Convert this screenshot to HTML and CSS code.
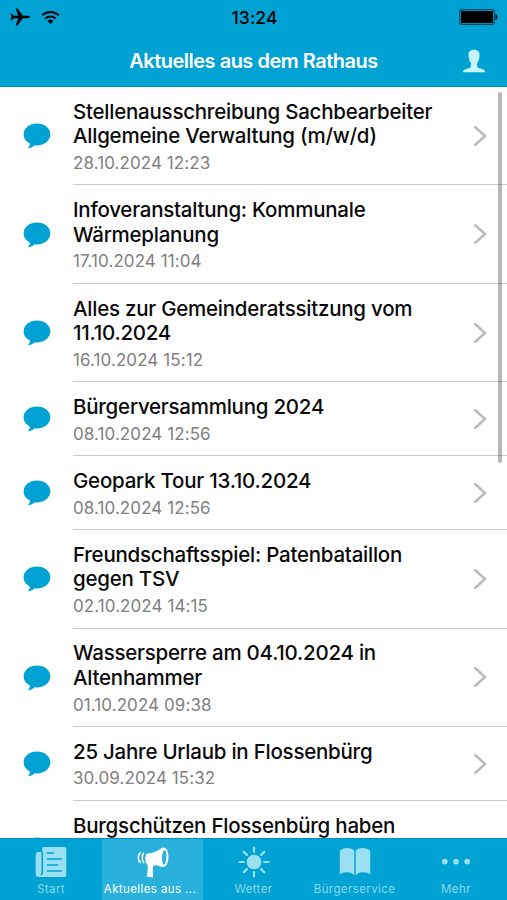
FILE: index.html
```html
<!DOCTYPE html>
<html lang="de">
<head>
    <meta charset="UTF-8">
    <meta name="viewport" content="width=device-width, initial-scale=1.0">
    <title>Aktuelles aus dem Rathaus</title>
    <link rel="stylesheet" href="styles.css">
</head>
<body>
    <!-- Shared icons -->
    <svg class="sprite" width="0" height="0">
        <symbol id="bubble" viewBox="0 0 28 26">
            <path d="M14 .4C6.600.4.600 5 .6 11.300c0 4 2.300 7.200 6.200 9.100.1 1.700-.3 3-1.500 4.200-.3.400 0 .7.500.6 2.400-.3 4.300-1.500 5.700-3 .8.100 1.600.200 2.500.2 7.400 0 13.400-4.900 13.400-11.100S21.400.4 14 .4z"/>
        </symbol>
        <symbol id="chevron" viewBox="0 0 14 22">
            <path d="M1.500 1.500 12 11 1.500 20.500"/>
        </symbol>
    </svg>

    <div class="app">
        <header class="header">
            <div class="status-bar">
                <div class="status-left">
                    <svg class="plane" viewBox="0 0 20 18">
                        <path d="M19.800 9c0 .8-.9 1.200-2 1.200h-5L7.600 17.500H5.700l2.500-7.300H3.800l-1.900 2.100H.6L1.400 9 .6 5.700h1.300l1.900 2.100h4.400L5.700.5h1.900l5.200 7.300h5c1.100 0 2 .4 2 1.200z"/>
                    </svg>
                    <svg class="wifi" viewBox="0 0 20 15">
                        <path d="M1.300 5.200a12.500 12.500 0 0 1 17.400 0M4.500 8.700a8 8 0 0 1 11 0"/>
                        <path class="wifi-dot" d="M6.900 11.200a4.500 4.500 0 0 1 6.200 0L10 14.400z"/>
                    </svg>
                </div>
                <div class="clock">13:24</div>
                <svg class="battery" viewBox="0 0 40 16">
                    <rect x=".7" y=".7" width="34.600" height="14.600" rx="2" class="battery-frame"/>
                    <rect x="2" y="2" width="32" height="12" rx=".5"/>
                    <path d="M36.500 5c1.300.4 2 1.600 2 3s-.7 2.600-2 3z"/>
                </svg>
            </div>
            <div class="nav-bar">
                <h1 class="nav-title">Aktuelles aus dem Rathaus</h1>
                <svg class="user" viewBox="0 0 24 24">
                    <path d="M12 .8c3.700 0 5.700 2.200 5.500 5.600-.1 3.400-1 5.900-2.400 7.600v3.200c0 1.200 1 1.700 3 2.200 2.900.6 4.800 1.400 5.200 3.800H.7c.4-2.400 2.300-3.200 5.200-3.800 2-.5 3-1 3-2.200V14c-1.400-1.700-2.300-4.200-2.400-7.600C6.300 3 8.300.8 12 .8z"/>
                </svg>
            </div>
        </header>

        <main class="news-list" id="news-list"></main>
        <div class="scrollbar"></div>

        <nav class="tab-bar">
            <a class="tab">
                <svg class="tab-icon" viewBox="0 0 32 32">
                    <path d="M9 1h20.500A1.800 1.800 0 0 1 31.300 2.800v26.400a1.800 1.800 0 0 1-1.800 1.800H4a3.300 3.300 0 0 1-3.300-3.300V8.500A2.500 2.500 0 0 1 3 6h4.300V2.700A1.700 1.700 0 0 1 9 1z"/>
                    <path class="cut" d="M7.300 6v20.500c0 1.200-.7 2-1.700 2M11.800 7h7M11.800 13h15M11.800 19h11.500M11.800 25h15"/>
                </svg>
                <span class="tab-label">Start</span>
            </a>
            <a class="tab active">
                <svg class="tab-icon" viewBox="0 0 32 32">
                    <path d="M10.500 7.500C17 7 21.500 4.500 24.300 2.200c3.300-2.700 7.200 1.800 7.200 8.500 0 6.600-3.500 11.500-7 10.200-2.600-1-4.600-1.600-7-1.600-1.300.4-1.800 1.500-1.700 3l.2 9.200-6.300-.9c.6-3.600 1.500-7.900.9-11.400C7.500 16.500 7.500 8 10.500 7.500z"/>
                    <ellipse class="horn" cx="27.200" cy="11.300" rx="3" ry="8.200" transform="rotate(3 27.200 11.300)"/>
                    <path class="waves" d="M7 6.800c-2.500 2-2.300 8.200.2 10.400M3.700 6.300C.4 8.700.5 14.300 3.600 16.800"/>
                </svg>
                <span class="tab-label">Aktuelles aus ...</span>
            </a>
            <a class="tab">
                <svg class="tab-icon" viewBox="0 0 32 32">
                    <circle cx="16" cy="16" r="7.300"/>
                    <path class="rays" d="M16 1.500v4.300M16 26.200v4.300M1.500 16h4.300M26.200 16h4.300M5.700 5.700l3.200 3.200M23.100 23.100l3.200 3.200M5.700 26.300l3.200-3.200M23.100 8.900l3.200-3.200"/>
                </svg>
                <span class="tab-label">Wetter</span>
            </a>
            <a class="tab">
                <svg class="tab-icon" viewBox="0 0 32 32">
                    <path d="M.8 5C3 1.200 12.500.7 15.300 4.500v25c-2.300-4-10.500-4.500-14.500-1zM16.700 4.500C19.500.7 29 1.200 31.200 5v23.500c-4-3.500-12.200-3-14.500 1z"/>
                </svg>
                <span class="tab-label">Bürgerservice</span>
            </a>
            <a class="tab">
                <svg class="tab-icon" viewBox="0 0 32 32">
                    <circle cx="4.800" cy="15.600" r="2.900"/>
                    <circle cx="16" cy="15.600" r="2.900"/>
                    <circle cx="27.200" cy="15.600" r="2.900"/>
                </svg>
                <span class="tab-label">Mehr</span>
            </a>
        </nav>
    </div>

    <script>
        const news = [
            { title: ['Stellenausschreibung Sachbearbeiter', 'Allgemeine Verwaltung (m/w/d)'], date: '28.10.2024 12:23' },
            { title: ['Infoveranstaltung: Kommunale', 'Wärmeplanung'], date: '17.10.2024 11:04' },
            { title: ['Alles zur Gemeinderatssitzung vom', '11.10.2024'], date: '16.10.2024 15:12' },
            { title: ['Bürgerversammlung 2024'], date: '08.10.2024 12:56' },
            { title: ['Geopark Tour 13.10.2024'], date: '08.10.2024 12:56' },
            { title: ['Freundschaftsspiel: Patenbataillon', 'gegen TSV'], date: '02.10.2024 14:15' },
            { title: ['Wassersperre am 04.10.2024 in', 'Altenhammer'], date: '01.10.2024 09:38' },
            { title: ['25 Jahre Urlaub in Flossenbürg'], date: '30.09.2024 15:32' },
            { title: ['Burgschützen Flossenbürg haben', ''], date: '' }
        ];

        const newsList = document.getElementById('news-list');

        // Create list rows
        news.forEach((item) => {
            const lines = item.title.map((line) => `<span class="line">${line}</span>`).join('');
            const row = document.createElement('article');
            row.className = 'news-item';
            row.innerHTML = `
                <svg class="bubble"><use href="#bubble"/></svg>
                <div class="news-body">
                    <div class="news-text">
                        <h2 class="news-title">${lines}</h2>
                        <p class="news-date">${item.date}</p>
                    </div>
                    <svg class="chevron"><use href="#chevron"/></svg>
                </div>`;
            newsList.appendChild(row);
        });
    </script>
</body>
</html>
```
FILE: styles.css
```css
* {
    box-sizing: border-box;
    margin: 0;
    padding: 0;
}

body {
    font-family: 'Inter', 'Liberation Sans', sans-serif;
    background-color: #fff;
    overflow: hidden;
}

.sprite {
    position: absolute;
}

.app {
    position: relative;
    display: flex;
    flex-direction: column;
    height: 900px;
    overflow: hidden;
}

.header {
    flex: none;
    height: 87px;
    background-color: #00a2d4;
    border-bottom: 1px solid #0087b4;
}

.status-bar {
    display: grid;
    grid-template-columns: 1fr auto 1fr;
    align-items: center;
    height: 34px;
    padding: 0 8px 0 10px;
}

.status-left {
    display: flex;
    align-items: center;
    gap: 11px;
}

.plane {
    width: 20px;
    height: 18px;
}

.wifi {
    width: 19px;
    height: 15px;
    fill: none;
    stroke: #000;
    stroke-width: 2;
}

.wifi-dot {
    fill: #000;
    stroke: none;
}

.clock {
    font-size: 17.5px;
    font-weight: 450;
    letter-spacing: 0.1px;
}

.battery {
    width: 40px;
    height: 16px;
    justify-self: end;
}

.battery-frame {
    fill: none;
    stroke: #02475c;
    stroke-width: 1.2;
}

.nav-bar {
    display: grid;
    grid-template-columns: 1fr auto 1fr;
    align-items: center;
    height: 53px;
    padding: 0 21px;
}

.nav-title {
    grid-column: 2;
    font-size: 20px;
    font-weight: 600;
    letter-spacing: -0.5px;
    color: #fff;
}

.user {
    width: 24px;
    height: 24px;
    margin-top: 1px;
    justify-self: end;
    fill: #c5f5ff;
}

.news-list {
    flex: 1;
    min-height: 0;
    overflow: hidden;
}

.news-item {
    display: flex;
    align-items: center;
}

.bubble {
    flex: none;
    width: 28px;
    height: 26px;
    margin: 0 22px 0 23px;
    fill: #00a2d4;
}

.news-body {
    flex: 1;
    display: flex;
    align-items: center;
    justify-content: space-between;
    padding: 12.7px 20px 8.6px 0;
    border-bottom: 1px solid #c8c8c8;
}

.news-title {
    font-size: 20.5px;
    font-weight: 480;
    line-height: 24.6px;
    letter-spacing: -0.24px;
    white-space: nowrap;
    color: #0a0a0a;
}

.line {
    display: block;
    min-height: 24.6px;
}

.news-date {
    height: 27px;
    padding-top: 1px;
    font-size: 17px;
    line-height: 26px;
    letter-spacing: 0.08px;
    color: #808080;
}

.chevron {
    flex: none;
    width: 14px;
    height: 22px;
    margin-bottom: 4px;
    fill: none;
    stroke: #bbb;
    stroke-width: 2.5;
}

.scrollbar {
    position: absolute;
    top: 92px;
    right: 5px;
    width: 4px;
    height: 371px;
    border-radius: 2px;
    background-color: rgba(0, 0, 0, 0.28);
}

.tab-bar {
    flex: none;
    display: grid;
    grid-template-columns: 102px 101px 101px 101px 102px;
    height: 62px;
    background-color: #00a2d4;
    border-top: 1px solid #0090bd;
}

.tab {
    display: flex;
    flex-direction: column;
    align-items: center;
    padding-top: 7px;
    color: #8bd7ec;
    fill: #9adff2;
}

.tab.active {
    color: #fff;
    fill: #fff;
    background-color: #29b1dc;
}

.tab-icon {
    width: 32px;
    height: 32px;
}

.tab-label {
    margin-top: 4px;
    font-size: 11.5px;
    line-height: 15px;
    letter-spacing: 0.4px;
    white-space: nowrap;
}

.active .tab-label {
    margin-right: 5px;
}

.cut {
    fill: none;
    stroke: #00a2d4;
    stroke-width: 1.6;
}

.horn {
    fill: #29b1dc;
    stroke: #fff;
    stroke-width: 1.6;
}

.waves {
    fill: none;
    stroke: #fff;
    stroke-width: 1.6;
}

.rays {
    stroke: #9adff2;
    stroke-width: 2.2;
    stroke-linecap: round;
}
```
